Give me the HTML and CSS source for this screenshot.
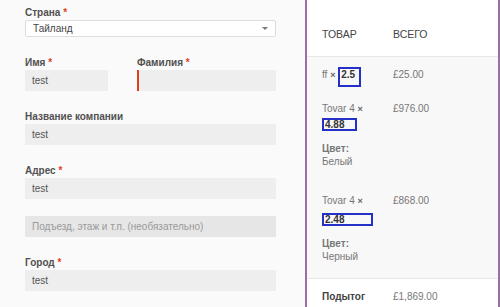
FILE: index.html
```html
<!DOCTYPE html>
<html lang="ru">
  <head>
    <meta charset="UTF-8" />
    <title>Оформление заказа</title>
    <link rel="stylesheet" href="styles.css">
  </head>
  <body>
    <div class="checkout">
      <div class="billing">
        <div class="field">
          <label>Страна <abbr>*</abbr></label>
          <div class="select">Тайланд<span class="arrow"></span></div>
        </div>
        <div class="field-row">
          <div class="field first">
            <label>Имя <abbr>*</abbr></label>
            <div class="input">test</div>
          </div>
          <div class="field last">
            <label>Фамилия <abbr>*</abbr></label>
            <div class="input invalid"></div>
          </div>
        </div>
        <div class="field">
          <label>Название компании</label>
          <div class="input">test</div>
        </div>
        <div class="field">
          <label>Адрес <abbr>*</abbr></label>
          <div class="input">test</div>
          <div class="input placeholder">Подъезд, этаж и т.п. (необязательно)</div>
        </div>
        <div class="field">
          <label>Город <abbr>*</abbr></label>
          <div class="input">test</div>
        </div>
      </div>

      <div class="review">
        <div class="review-head">
          <div class="col-name">Товар</div>
          <div class="col-total">Всего</div>
        </div>
        <div class="review-body">
          <div class="item item-short">
            <div class="col-name">ff <span class="times">×</span> <span class="qty qty-tall">2.5</span></div>
            <div class="col-total">£25.00</div>
          </div>
          <div class="item item-white">
            <div class="col-name">
              Tovar 4 <span class="times">×</span>
              <span class="qty qty-mid">4.88</span>
              <dl class="variation">
                <dt>Цвет:</dt>
                <dd>Белый</dd>
              </dl>
            </div>
            <div class="col-total">£976.00</div>
          </div>
          <div class="item item-black">
            <div class="col-name">
              Tovar 4 <span class="times">×</span>
              <span class="qty qty-wide">2.48</span>
              <dl class="variation">
                <dt>Цвет:</dt>
                <dd>Черный</dd>
              </dl>
            </div>
            <div class="col-total">£868.00</div>
          </div>
        </div>
        <div class="subtotal">
          <div class="col-name">Подытог</div>
          <div class="col-total">£1,869.00</div>
        </div>
      </div>
    </div>
  </body>
</html>
```

FILE: styles.css
```css
body {
  margin: 0;
  background-color: #fff;
  font-family: "Liberation Sans", Arial, sans-serif;
}
.checkout {
  display: flex;
  height: 307px;
  overflow: hidden;
}
.billing {
  width: 251px;
  padding: 6px 29px 0 25px;
  background-color: #fafafa;
}
.field {
  margin-bottom: 19px;
}
.field label {
  display: block;
  height: 14px;
  font-size: 10px;
  font-weight: bold;
  color: #515151;
  line-height: 14px;
}
.field abbr {
  color: #e2401c;
  text-decoration: none;
}
.field-row {
  display: flex;
  justify-content: space-between;
}
.field.first {
  width: 83px;
}
.field.last {
  width: 139px;
}
.select {
  position: relative;
  height: 15px;
  padding: 0 7px;
  border: 1px solid #ddd;
  border-radius: 2px;
  background-color: #fff;
  font-size: 10px;
  line-height: 15px;
  color: #444;
}
.arrow {
  position: absolute;
  right: 7px;
  top: 6px;
  border-left: 3px solid transparent;
  border-right: 3px solid transparent;
  border-top: 3px solid #777;
}
.input {
  height: 21px;
  padding: 0 7px;
  background-color: #eee;
  font-size: 10px;
  line-height: 21px;
  color: #555;
}
.input.invalid {
  border-left: 2px solid #e2401c;
}
.input.placeholder {
  margin-top: 17px;
  background-color: #e6e6e6;
  color: #9a9a9a;
}

.review {
  width: 191px;
  border-left: 2px solid #9b6fa6;
  border-right: 2px solid #9b6fa6;
  font-size: 10px;
  color: #777;
}
.review-head,
.item,
.subtotal {
  display: flex;
  padding-left: 15px;
}
.col-name {
  width: 71px;
}
.col-total {
  flex: 1;
}
.review-head {
  height: 57px;
  align-items: center;
  padding-top: 12px;
  box-sizing: border-box;
  border-bottom: 1px solid #e8e8e8;
  text-transform: uppercase;
  color: #444;
  font-size: 10.5px;
}
.review-body {
  background-color: #f8f8f8;
  height: 221px;
}
.item {
  box-sizing: border-box;
  line-height: 15px;
}
.item-short {
  height: 34px;
  padding-top: 10px;
}
.item-white {
  height: 91px;
  padding-top: 10px;
}
.item-black {
  height: 96px;
  padding-top: 11px;
}
.times {
  font-weight: bold;
  color: #666;
  font-size: 9px;
}
.qty {
  box-sizing: border-box;
  border: 2px solid #2530c9;
  font-weight: bold;
  color: #333;
  font-size: 10px;
  padding-left: 1px;
}
.qty-tall {
  display: inline-block;
  width: 23px;
  height: 20px;
  line-height: 12px;
  vertical-align: top;
}
.qty-mid,
.qty-wide {
  display: block;
  height: 13px;
  line-height: 9px;
}
.qty-mid {
  width: 35px;
  margin-top: 1px;
}
.qty-wide {
  width: 51px;
  margin-top: 4px;
}
.variation {
  margin: 11px 0 0;
  line-height: 13px;
}
.variation dt {
  font-weight: bold;
}
.variation dd {
  margin: 0;
}
.subtotal {
  height: 34px;
  align-items: center;
  border-top: 1px solid #e8e8e8;
}
.subtotal .col-name {
  font-weight: bold;
  color: #444;
}
```
